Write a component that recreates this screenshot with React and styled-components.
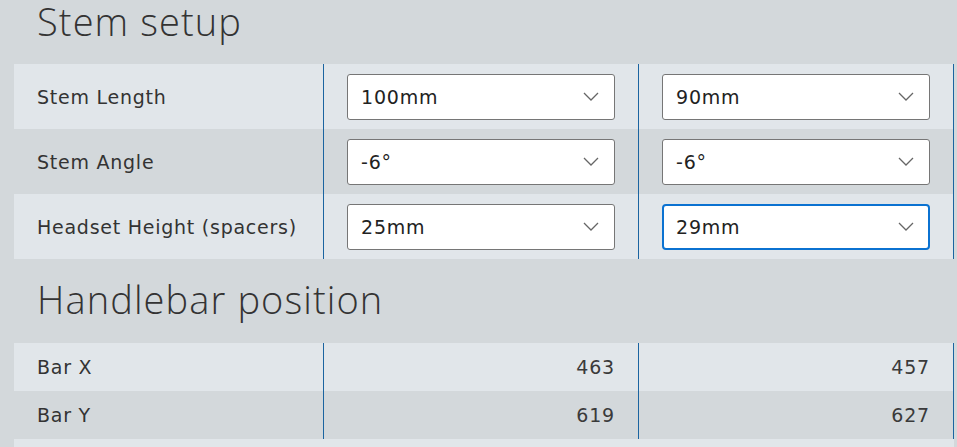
import React from 'react';
import styled, { createGlobalStyle } from 'styled-components';

const Global = createGlobalStyle`
  html, body {
    margin: 0;
    padding: 0;
    background: #d3d8db;
    font-family: "DejaVu Sans", "Open Sans", sans-serif;
    color: #333;
  }
`;

const Page = styled.div`
  width: 957px;
  height: 447px;
  overflow: hidden;
  padding-left: 14px;
  box-sizing: border-box;
`;

const Heading = styled.h2`
  margin: 0;
  box-sizing: border-box;
  height: ${p => p.$h}px;
  padding: ${p => p.$pt}px 0 0 23px;
  font-family: "Open Sans", sans-serif;
  font-weight: 300;
  font-size: 38px;
  line-height: 1;
  letter-spacing: 1.1px;
  color: #333;
`;

const Table = styled.div`
  width: 940px;
  display: grid;
  grid-template-columns: 309px 315px 316px;
`;

const Cell = styled.div`
  height: ${p => p.$h}px;
  box-sizing: border-box;
  background: ${p => (p.$light ? '#e1e6ea' : '#d3d8db')};
  display: flex;
  align-items: center;
  padding: 0 23px;
  border-left: ${p => (p.$divider ? '1px solid #1b64a0' : 'none')};
  border-right: ${p => (p.$last ? '1px solid #1b64a0' : 'none')};
  justify-content: ${p => (p.$right ? 'flex-end' : 'flex-start')};
`;

const Label = styled.span`
  font-size: 19px;
  letter-spacing: 0.75px;
  color: #333;
`;

const Value = styled.span`
  font-size: 19px;
  letter-spacing: 0.8px;
  color: #3a3a3a;
`;

const Select = styled.div`
  flex: 1;
  height: 46px;
  box-sizing: border-box;
  background: #fff;
  border: ${p => (p.$focus ? '2px solid #0b72d1' : '1px solid #767676')};
  border-radius: ${p => (p.$focus ? '4px' : '3px')};
  display: flex;
  align-items: center;
  justify-content: space-between;
  padding: 0 ${p => (p.$focus ? 14 : 15)}px 0 ${p => (p.$focus ? 12 : 13)}px;
  font-size: 19px;
  letter-spacing: 0.8px;
  color: #222;
`;

const Chevron = () => (
  <svg width="16" height="9" viewBox="0 0 16 9" fill="none">
    <path d="M1 1l7 7 7-7" stroke="#666" strokeWidth="1.3" />
  </svg>
);

const stemRows = [
  ['Stem Length', '100mm', '90mm'],
  ['Stem Angle', '-6°', '-6°'],
  ['Headset Height (spacers)', '25mm', '29mm'],
];

const barRows = [
  ['Bar X', '463', '457'],
  ['Bar Y', '619', '627'],
];

export default function App() {
  return (
    <Page>
      <Global />
      <Heading $h={64} $pt={2}>Stem setup</Heading>
      <Table>
        {stemRows.map(([label, a, b], i) => (
          <React.Fragment key={label}>
            <Cell $h={65} $light={i % 2 === 0}><Label>{label}</Label></Cell>
            <Cell $h={65} $light={i % 2 === 0} $divider>
              <Select>{a}<Chevron /></Select>
            </Cell>
            <Cell $h={65} $light={i % 2 === 0} $divider $last>
              <Select $focus={i === 2}>{b}<Chevron /></Select>
            </Cell>
          </React.Fragment>
        ))}
      </Table>
      <Heading $h={84} $pt={21}>Handlebar position</Heading>
      <Table>
        {barRows.map(([label, a, b], i) => (
          <React.Fragment key={label}>
            <Cell $h={48} $light={i % 2 === 0}><Label>{label}</Label></Cell>
            <Cell $h={48} $light={i % 2 === 0} $divider $right><Value>{a}</Value></Cell>
            <Cell $h={48} $light={i % 2 === 0} $divider $last $right><Value>{b}</Value></Cell>
          </React.Fragment>
        ))}
        <Cell $h={20} $light />
        <Cell $h={20} $light />
        <Cell $h={20} $light />
      </Table>
    </Page>
  );
}
